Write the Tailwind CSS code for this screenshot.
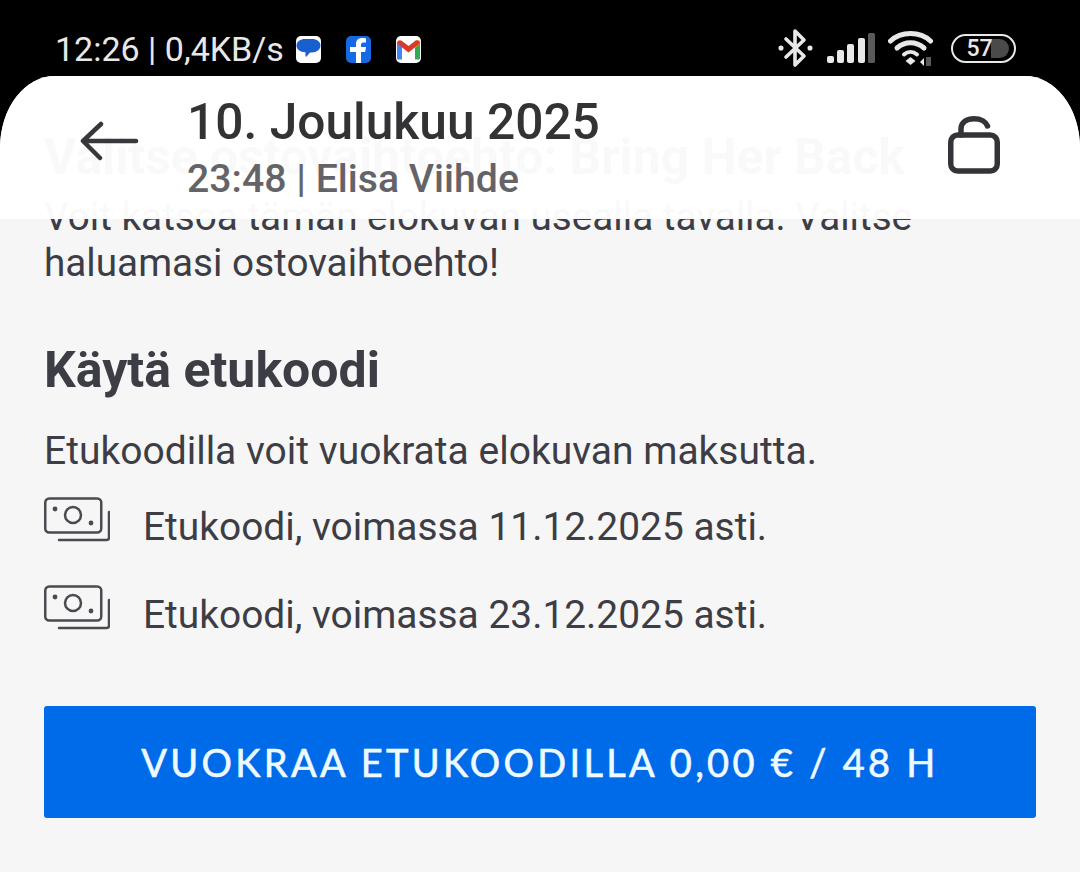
<!DOCTYPE html>
<html lang="fi">
<head>
    <meta charset="UTF-8">
    <meta name="viewport" content="width=device-width, initial-scale=1.0">
    <title>Vuokraa etukoodilla</title>
    <script src="https://cdn.jsdelivr.net/npm/@tailwindcss/browser@4"></script>
</head>
<body class="bg-black w-[1080px] h-[872px] overflow-hidden font-['Roboto',sans-serif]">

    <!-- Status bar -->
    <div class="h-[76px] pt-[29px] pl-[55px] pr-[64px] flex items-start justify-between text-[#e8e8e8]">
        <div class="flex items-center h-[40px]">
            <span class="text-[34px] leading-[40px] whitespace-nowrap">12:26 | 0,4KB/s</span>
            <div class="flex gap-[25px] ml-[12px]">
                <svg class="w-[25px] h-[27px]" viewBox="0 0 25 27">
                    <rect width="25" height="27" rx="5" fill="#fff"/>
                    <path d="M9 3h7c4.500 0 8.500 2.600 8.500 6.500S20.500 16.500 16 16.500h-2l-3.500 4c-.4.400-1 .1-1-.4v-3.800C4 16 .5 13.500.5 9.500S4.500 3 9 3z" fill="#1a5fd0"/>
                </svg>
                <svg class="w-[25px] h-[27px]" viewBox="0 0 25 27">
                    <rect width="25" height="27" rx="5" fill="#1668e3"/>
                    <path d="M10 27V16H4v-5h6V8c0-4 2.500-6 6-6 1.500 0 3 .2 4 .4v4h-2.500c-2 0-2.500 1-2.500 2.500V11h5l-.8 5H15v11z" fill="#fff"/>
                </svg>
                <svg class="w-[25px] h-[27px]" viewBox="0 0 25 27">
                    <rect width="25" height="27" rx="5" fill="#fff"/>
                    <path d="M1 7v15c0 1 .6 1.500 1.500 1.500H6V11z" fill="#4285f4"/>
                    <path d="M24 7v15c0 1-.6 1.500-1.500 1.500H19V11z" fill="#34a853"/>
                    <path d="M19 4.500 24 4.500V8l-5 4z" fill="#fbbc04"/>
                    <path d="M1 7.500C1 4.500 4 3.500 6 5l6.500 5L19 5c2-1.500 5-.5 5 2.500L12.500 16.500z" fill="#d8392b"/>
                </svg>
            </div>
        </div>
        <div class="flex items-center h-[38px]">
            <svg class="w-[35px] h-[40px]" viewBox="0 0 35 40" fill="none" stroke="#e8e8e8" stroke-width="3.600" stroke-linejoin="round" stroke-linecap="round">
                <path d="M8 11 26 28 17 37V3l9 9-18 17"/>
                <circle cx="3" cy="20" r="1.800" fill="#e8e8e8" stroke-width="1.500"/>
                <circle cx="32" cy="20" r="1.800" fill="#e8e8e8" stroke-width="1.500"/>
            </svg>
            <svg class="w-[48px] h-[30px] ml-[14px]" viewBox="0 0 48 30">
                <rect x="0" y="23" width="7" height="7" rx="2" fill="#e8e8e8"/>
                <rect x="10" y="17" width="7" height="13" rx="2" fill="#e8e8e8"/>
                <rect x="20" y="11" width="7" height="19" rx="2" fill="#e8e8e8"/>
                <rect x="31" y="5" width="7" height="25" rx="2" fill="#e8e8e8"/>
                <rect x="41" y="0" width="7" height="30" rx="1.500" fill="#5a5a5a"/>
            </svg>
            <svg class="w-[45px] h-[35px] ml-[13px]" viewBox="0 0 45 35" fill="none">
                <path d="M2.500 10C13 0 32 0 42.500 10" stroke="#e8e8e8" stroke-width="5" stroke-linecap="round"/>
                <path d="M9 17C17 10 28 10 36 17" stroke="#e8e8e8" stroke-width="5" stroke-linecap="round"/>
                <path d="M16 23.500C20 20 25 20 29 23.500" stroke="#e8e8e8" stroke-width="4" stroke-linecap="round"/>
                <path d="M22.500 26 27.500 30 22.500 34 17.500 30z" fill="#e8e8e8"/>
                <path d="M32 31l4-4v8z" fill="#e8e8e8"/>
                <path d="M38 26h5v9h-5z" fill="#5a5a5a"/>
            </svg>
            <div class="relative w-[65px] h-[29px] ml-[18px] rounded-full border-[2.500px] border-[#e8e8e8] overflow-hidden">
                <div class="absolute inset-y-[3px] left-[38px] right-[5px] rounded-r-full bg-[#4a4a4a]"></div>
                <span class="absolute inset-0 pr-[8px] flex items-center justify-center text-[23px] leading-none font-medium">57</span>
            </div>
        </div>
    </div>

    <!-- Panel -->
    <div class="relative h-[796px] bg-[#f6f6f7] rounded-tl-[55px_72px] rounded-tr-[55px_72px] overflow-hidden text-[#3d3d45]">
        <div class="px-[44px] pt-[50px]">
            <h1 class="text-[49.750px] leading-[62px] font-bold whitespace-nowrap">Valitse ostovaihtoehto: Bring Her Back</h1>
            <p class="mt-[6px] text-[38.700px] leading-[46px] w-[900px]">Voit katsoa tämän elokuvan usealla tavalla. Valitse haluamasi ostovaihtoehto!</p>

            <h2 class="mt-[53px] text-[50px] leading-[62px] font-bold">Käytä etukoodi</h2>
            <p class="mt-[29px] text-[39px] leading-[42px]">Etukoodilla voit vuokrata elokuvan maksutta.</p>

            <div class="mt-[22px] flex flex-col gap-[22px]">
                <div class="flex items-center gap-[33px] h-[66px]">
                    <svg class="w-[66px] h-[46px] mt-[-14px] shrink-0" viewBox="0 0 66 46" fill="none" stroke="#4a4a50" stroke-width="2.500">
                        <rect x="1.250" y="1.500" width="56" height="34" rx="4"/>
                        <circle cx="29" cy="18" r="8"/>
                        <circle cx="11" cy="12" r="2.400" fill="#4a4a50" stroke="none"/>
                        <circle cx="47" cy="26" r="2.400" fill="#4a4a50" stroke="none"/>
                        <path d="M15 43h47.500c1.500 0 2.500-1 2.500-2.500V15" stroke-linecap="round"/>
                    </svg>
                    <span class="text-[38.900px] leading-[42px]">Etukoodi, voimassa 11.12.2025 asti.</span>
                </div>
                <div class="flex items-center gap-[33px] h-[66px]">
                    <svg class="w-[66px] h-[46px] mt-[-14px] shrink-0" viewBox="0 0 66 46" fill="none" stroke="#4a4a50" stroke-width="2.500">
                        <rect x="1.250" y="1.500" width="56" height="34" rx="4"/>
                        <circle cx="29" cy="18" r="8"/>
                        <circle cx="11" cy="12" r="2.400" fill="#4a4a50" stroke="none"/>
                        <circle cx="47" cy="26" r="2.400" fill="#4a4a50" stroke="none"/>
                        <path d="M15 43h47.500c1.500 0 2.500-1 2.500-2.500V15" stroke-linecap="round"/>
                    </svg>
                    <span class="text-[38.900px] leading-[42px]">Etukoodi, voimassa 23.12.2025 asti.</span>
                </div>
            </div>
        </div>

        <div class="mx-[44px] mt-[58px] h-[112px] bg-[#006be9] rounded-[3px] flex items-center justify-center">
            <span class="text-[#eefaff] text-[38px] [-webkit-text-stroke:0.6px_#eefaff] tracking-[3.300px] whitespace-nowrap font-['Lato',sans-serif]">VUOKRAA ETUKOODILLA 0,00 € / 48 H</span>
        </div>

        <!-- Sticky header, translucent over the scrolled content -->
        <div class="absolute inset-x-0 top-0 h-[143px] bg-white/[0.97] flex items-start pl-[80px] pr-[78px]">
            <svg class="w-[60px] h-[44px] mt-[43px] shrink-0" viewBox="0 0 60 44" fill="none" stroke="#38383c" stroke-width="4.500" stroke-linecap="round" stroke-linejoin="round">
                <path d="M56 22H4M21 5 3 22l17 17"/>
            </svg>
            <div class="ml-[47px] grow">
                <div class="text-[49.700px] leading-[56px] mt-[18px] font-medium text-[#333336] whitespace-nowrap">10. Joulukuu 2025</div>
                <div class="text-[39.200px] leading-[42px] mt-[8px] font-medium text-[#646468] whitespace-nowrap">23:48 | Elisa Viihde</div>
            </div>
            <svg class="w-[54px] h-[58px] mt-[40px] shrink-0" viewBox="0 0 54 58" fill="none" stroke="#343438" stroke-width="5.500" stroke-linejoin="round" stroke-linecap="round">
                <rect x="2.750" y="19" width="46.500" height="36" rx="7"/>
                <path d="M13 19V13C13 6 19 2.750 26 2.750S38 6 39.500 10"/>
            </svg>
        </div>
    </div>

</body>
</html>
